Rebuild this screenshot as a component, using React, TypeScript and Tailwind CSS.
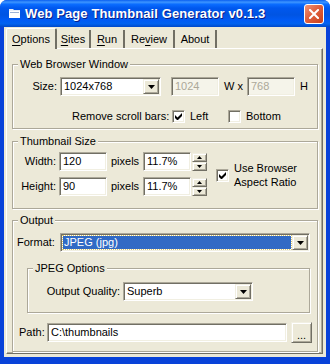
import type { ReactNode } from "react";

// classic 3D borders
const sunken =
  "border border-t-[#aca899] border-l-[#aca899] border-b-white border-r-white shadow-[inset_1px_1px_0_#716f64,inset_-1px_-1px_0_#f1efe2]";
const raised =
  "border border-t-[#f1efe2] border-l-[#f1efe2] border-b-[#716f64] border-r-[#716f64] shadow-[inset_1px_1px_0_#fff,inset_-1px_-1px_0_#aca899] bg-[#ece9d8]";

function Arrow({ up = false, small = false }: { up?: boolean; small?: boolean }) {
  const w = small ? 5 : 7;
  const h = small ? 3 : 4;
  return (
    <svg width={w} height={h} viewBox={`0 0 ${w} ${h}`}>
      {up ? (
        <path d={`M0 ${h}H${w}L${w / 2} 0Z`} fill="#000" />
      ) : (
        <path d={`M0 0H${w}L${w / 2} ${h}Z`} fill="#000" />
      )}
    </svg>
  );
}

function Combo({ value, width, selected = false }: { value: string; width: string; selected?: boolean }) {
  return (
    <div className={`${sunken} ${width} h-[19px] bg-white flex p-[1px]`}>
      <div className="flex-1 flex items-center pl-[1px] pr-[1px]">
        {selected ? (
          <div className="h-[13px] w-full bg-[#316ac5] text-white outline outline-1 outline-dotted outline-[#d9c56a] flex items-center pl-[1px] leading-[13px]">
            {value}
          </div>
        ) : (
          <span className="pl-[1px] leading-[13px]">{value}</span>
        )}
      </div>
      <div className={`${raised} w-[16px] h-full flex items-center justify-center`}>
        <Arrow />
      </div>
    </div>
  );
}

function TextBox({ value, width, disabled = false }: { value: string; width: string; disabled?: boolean }) {
  return (
    <div
      className={`${sunken} ${width} h-[19px] flex items-center pl-[3px] leading-[13px] ${
        disabled ? "bg-[#f5f4ea] text-[#aca899]" : "bg-white"
      }`}
    >
      {value}
    </div>
  );
}

function Check({ checked }: { checked: boolean }) {
  return (
    <div className={`${sunken} w-[13px] h-[13px] bg-white flex items-center justify-center shrink-0`}>
      {checked && (
        <svg width="7" height="7" viewBox="0 0 7 7">
          <path d="M0 2v3l2 2h1l4-4V0L2.5 4.5Z" fill="#000" />
        </svg>
      )}
    </div>
  );
}

function Spinner() {
  return (
    <div className="flex flex-col w-[15px] h-[18px]">
      <div className={`${raised} h-[9px] flex items-center justify-center`}>
        <Arrow up small />
      </div>
      <div className={`${raised} h-[9px] flex items-center justify-center`}>
        <Arrow small />
      </div>
    </div>
  );
}

function Group({ title, className, children }: { title: string; className: string; children: ReactNode }) {
  return (
    <fieldset
      className={`border border-[#aca899] shadow-[inset_1px_1px_0_#fff,1px_1px_0_#fff] ${className}`}
    >
      <legend className="ml-[5px] px-[2px] leading-[13px] bg-[#ece9d8]">{title}</legend>
      {children}
    </fieldset>
  );
}

const tabs = [
  { label: "Options", key: 0, w: "w-[51px]" },
  { label: "Sites", key: 0, w: "w-[34px]" },
  { label: "Run", key: 0, w: "w-[34px]" },
  { label: "Review", key: 2, w: "w-[50px]" },
  { label: "About", key: -1, w: "w-[42px]" },
];

export default function App() {
  return (
    <div className="w-[330px] h-[364px] bg-[#0842d9] rounded-t-[7px] overflow-hidden flex flex-col font-['Liberation_Sans',Arial,sans-serif] text-[11px] text-black">
      {/* title bar */}
      <div className="h-[27px] shrink-0 flex items-center bg-[linear-gradient(to_bottom,#0a5ff0_0%,#3d95ff_8%,#0a6cff_16%,#0058ee_30%,#0054e3_55%,#005bf5_75%,#0162ef_88%,#0048c8_100%)]">
        <svg className="ml-[9px]" width="12" height="11" viewBox="0 0 12 11">
          <path d="M0 1h4l1 1h6v8H0Z" fill="#e8eef8" />
          <path d="M0 3h11v7H0Z" fill="#ffffff" />
          <path d="M1 4h9v1H1Z" fill="#9db3d6" />
        </svg>
        <span className="ml-[4px] text-white font-bold text-[13px] tracking-[0.1px] [text-shadow:1px_1px_0_#0a1e8a]">
          Web Page Thumbnail Generator v0.1.3
        </span>
        <div className="ml-auto mr-[6px] w-[20px] h-[20px] rounded-[3px] border border-white bg-[linear-gradient(135deg,#f09478_0%,#e0603e_45%,#c8401c_100%)] flex items-center justify-center">
          <svg width="10" height="10" viewBox="0 0 10 10">
            <path d="M1 1L9 9M9 1L1 9" stroke="#fff" strokeWidth="2" strokeLinecap="square" />
          </svg>
        </div>
      </div>

      {/* dialog body */}
      <div className="mx-[4px] h-[330px] bg-[#ece9d8] flex flex-col">
        <div className="h-[21px] flex items-end pl-[2px]">
          {tabs.map((t, i) => {
            const sel = i === 0;
            const text =
              t.key < 0 ? (
                t.label
              ) : (
                <>
                  {t.label.slice(0, t.key)}
                  <span className="underline underline-offset-[2px]">{t.label[t.key]}</span>
                  {t.label.slice(t.key + 1)}
                </>
              );
            return (
              <div
                key={t.label}
                className={`${t.w} flex items-center justify-center pt-[1px] ${
                  sel
                    ? "h-[21px] relative z-10 -mb-px bg-[#ece9d8] border-l border-t border-white border-r-2 border-r-[#716f64] rounded-t-[2px]"
                    : "h-[18px] border-r-2 border-r-[#716f64]"
                }`}
              >
                {text}
              </div>
            );
          })}
        </div>

        {/* tab page */}
        <div className="ml-[2px] w-[317px] h-[306px] border-l border-t border-white border-r border-b border-r-[#716f64] border-b-[#716f64] shadow-[inset_-1px_-1px_0_#aca899] flex flex-col">
          <Group title="Web Browser Window" className="ml-[5px] mt-[9px] w-[306px] h-[71px]">
            <div className="mt-[6px] flex items-center">
              <span className="w-[44px] text-right">Size:</span>
              <div className="ml-[3px]">
                <Combo value="1024x768" width="w-[101px]" />
              </div>
              <div className="ml-[10px]">
                <TextBox value="1024" width="w-[48px]" disabled />
              </div>
              <span className="ml-[5px] w-[23px]">W x</span>
              <TextBox value="768" width="w-[48px]" disabled />
              <span className="ml-[5px]">H</span>
            </div>
            <div className="mt-[12px] flex items-center">
              <span className="ml-[59px] w-[100px] whitespace-nowrap">Remove scroll bars:</span>
              <Check checked />
              <span className="ml-[5px] w-[38px]">Left</span>
              <Check checked={false} />
              <span className="ml-[5px]">Bottom</span>
            </div>
          </Group>

          <Group title="Thumbnail Size" className="ml-[5px] mt-[6px] w-[306px] h-[74px]">
            <div className="mt-[4px] flex items-center">
              <div className="flex flex-col gap-[6px]">
                {[
                  ["Width:", "120"],
                  ["Height:", "90"],
                ].map(([l, v]) => (
                  <div key={l} className="flex items-center">
                    <span className="w-[43px] text-right">{l}</span>
                    <div className="ml-[3px]">
                      <TextBox value={v} width="w-[48px]" />
                    </div>
                    <span className="ml-[4px] w-[32px]">pixels</span>
                    <TextBox value="11.7%" width="w-[48px]" />
                    <div className="ml-[1px]">
                      <Spinner />
                    </div>
                  </div>
                ))}
              </div>
              <div className="ml-[9px] flex items-center mt-[2px]">
                <Check checked />
                <span className="ml-[5px] leading-[14px]">
                  Use Browser
                  <br />
                  Aspect Ratio
                </span>
              </div>
            </div>
          </Group>

          <Group title="Output" className="ml-[5px] mt-[5px] w-[306px] h-[138px]">
            <div className="mt-[6px] flex items-center">
              <span className="ml-[4px] w-[43px]">Format:</span>
              <Combo value="JPEG (jpg)" width="w-[250px]" selected />
            </div>
            <Group title="JPEG Options" className="ml-[14px] mt-[10px] w-[283px] h-[51px]">
              <div className="mt-[7px] flex items-center">
                <span className="w-[92px] text-right">Output Quality:</span>
                <div className="ml-[3px]">
                  <Combo value="Superb" width="w-[130px]" />
                </div>
              </div>
            </Group>
            <div className="mt-[9px] flex items-center">
              <span className="ml-[6px] w-[28px]">Path:</span>
              <TextBox value="C:\thumbnails" width="w-[240px]" />
              <div className={`${raised} ml-[4px] w-[21px] h-[21px] flex items-end justify-center pb-[3px] leading-[8px]`}>
                ...
              </div>
            </div>
          </Group>
        </div>
      </div>
    </div>
  );
}
